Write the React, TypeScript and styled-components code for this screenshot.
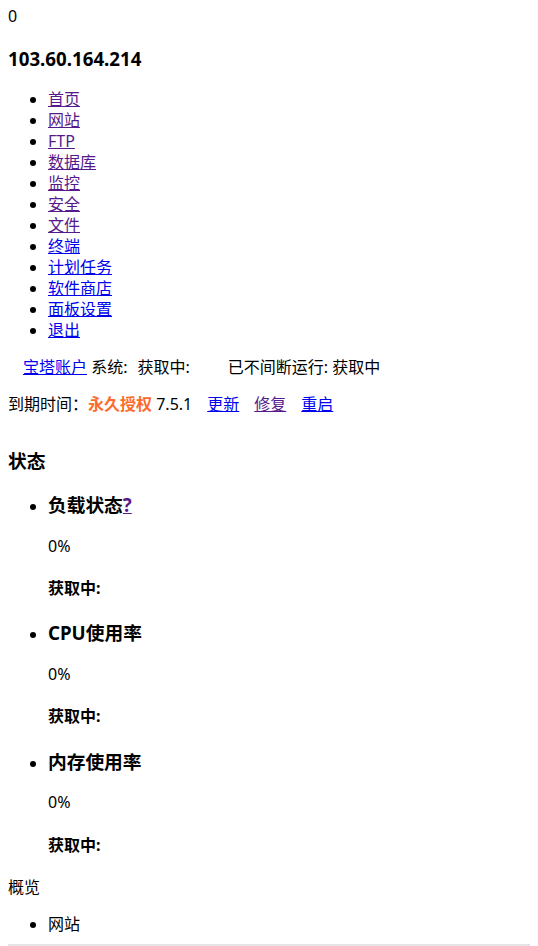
import React from "react";
import styled, { createGlobalStyle } from "styled-components";

const GlobalStyle = createGlobalStyle`
  html {
    background: #fff;
  }

  body {
    margin: 6px 8px 0;
    color: #000;
    font-family: "Noto Sans", "Noto Sans CJK SC", sans-serif;
    font-size: 16px;
    line-height: 21px;
  }
`;

const Counter = styled.div`
  line-height: 21px;
`;

const HostTitle = styled.h3`
  font-size: 18.72px;
  line-height: 25px;
  margin: 18.72px 0;
`;

const NavList = styled.ul`
  margin: 18.72px 0 16px;
  padding-left: 40px;
`;

const NavLink = styled.a<{ visited?: boolean }>`
  color: ${(props) => (props.visited ? "#551a8b" : "#0000ee")};
  text-decoration: underline;
`;

const InfoRow = styled.p`
  margin: 16px 0;
  padding-left: 15px;
  white-space: pre;
`;

const Value = styled.span<{ gap?: number }>`
  margin-left: ${(props) => props.gap || 0}px;
`;

const ExpireRow = styled.p`
  margin: 16px 0 0;
`;

const AuthTag = styled.strong`
  color: #fc6b2c;
  font-weight: 700;
`;

const ActionLink = styled(NavLink)`
  margin-left: 15px;
`;

const SectionTitle = styled.h3`
  font-size: 18.72px;
  line-height: 25px;
  margin: 33px 0 18.72px;
`;

const StatusList = styled.ul`
  margin: 0;
  padding-left: 40px;
`;

const StatusName = styled.h3`
  font-size: 18.72px;
  line-height: 25px;
  margin: 18.72px 0;
`;

const StatusValue = styled.p`
  margin: 16px 0;
`;

const StatusNote = styled.h4`
  font-size: 16px;
  line-height: 21px;
  margin: 21.28px 0;
`;

const OverviewLabel = styled.div`
  margin-top: 21.28px;
`;

const OverviewList = styled.ul`
  margin: 16px 0 0;
  padding-left: 40px;
`;

const Divider = styled.div`
  margin: 9px -8px 0;
  height: 0;
  border-top: 2px solid #e4e4e4;
`;

const navItems = [
  { label: "首页", visited: true },
  { label: "网站", visited: true },
  { label: "FTP", visited: true },
  { label: "数据库", visited: true },
  { label: "监控", visited: true },
  { label: "安全", visited: true },
  { label: "文件", visited: true },
  { label: "终端", visited: false },
  { label: "计划任务", visited: false },
  { label: "软件商店", visited: false },
  { label: "面板设置", visited: false },
  { label: "退出", visited: false },
];

const statusItems = [
  { title: "负载状态", help: true },
  { title: "CPU使用率", help: false },
  { title: "内存使用率", help: false },
];

export default function App() {
  return (
    <>
      <GlobalStyle />
      <Counter>0</Counter>
      <HostTitle>103.60.164.214</HostTitle>
      <NavList>
        {navItems.map((item) => (
          <li key={item.label}>
            <NavLink href="#" visited={item.visited}>
              {item.label}
            </NavLink>
          </li>
        ))}
      </NavList>
      <InfoRow>
        <NavLink href="#">宝塔账户</NavLink> 系统:
        <Value gap={10}>获取中:</Value>
        <Value gap={38}>已不间断运行: 获取中</Value>
      </InfoRow>
      <ExpireRow>
        到期时间：<AuthTag>永久授权</AuthTag> 7.5.1
        <ActionLink href="#">更新</ActionLink>
        <ActionLink href="#" visited>
          修复
        </ActionLink>
        <ActionLink href="#">重启</ActionLink>
      </ExpireRow>
      <SectionTitle>状态</SectionTitle>
      <StatusList>
        {statusItems.map((item) => (
          <li key={item.title}>
            <StatusName>
              {item.title}
              {item.help && (
                <NavLink href="#" visited>
                  ?
                </NavLink>
              )}
            </StatusName>
            <StatusValue>0%</StatusValue>
            <StatusNote>获取中:</StatusNote>
          </li>
        ))}
      </StatusList>
      <OverviewLabel>概览</OverviewLabel>
      <OverviewList>
        <li>网站</li>
      </OverviewList>
      <Divider />
    </>
  );
}
